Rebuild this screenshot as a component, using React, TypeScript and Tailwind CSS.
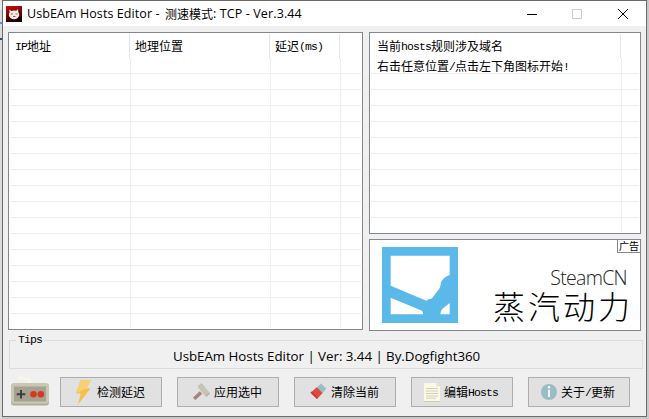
import React from 'react';

const MONO = "font-['Liberation_Mono','Noto_Sans_CJK_SC',monospace]";
const CJK = "font-['Noto_Sans_CJK_SC',sans-serif]";
const UI = "font-['Open_Sans','Noto_Sans_CJK_SC',sans-serif]";

function L({ children }: { children: React.ReactNode }) {
  return <span className={`${MONO} pt-0.5 text-[11.5px] leading-3 tracking-[-0.9px]`}>{children}</span>;
}

function Rows({ count, cols, last }: { count: number; cols: string[]; last: string }) {
  const cells = cols.map((w, i) => <div key={i} className={`${w} h-full shrink-0 border-r border-[#eeeeee]`} />);
  return (
    <>
      {Array.from({ length: count }, (_, i) => (
        <div key={i} className="flex h-4 shrink-0 border-b border-[#eeeeee]">{cells}</div>
      ))}
      <div className={`flex shrink-0 ${last}`}>{cells}</div>
    </>
  );
}

function Btn({ icon, children }: { icon: React.ReactNode; children: React.ReactNode }) {
  return (
    <button className={`flex h-[30px] w-[102px] shrink-0 items-center border border-[#adadad] bg-[#e1e1e1] pl-3 ${CJK} text-[12px] leading-[14px] whitespace-nowrap text-black`}>
      {icon}
      <span className="flex items-center">{children}</span>
    </button>
  );
}

function AppIcon() {
  return (
    <svg width="16" height="16" viewBox="0 0 16 16" className="shrink-0">
      <defs>
        <linearGradient id="red" x1="0" y1="0" x2="0.3" y2="1">
          <stop offset="0" stopColor="#e00808" />
          <stop offset="1" stopColor="#180000" />
        </linearGradient>
      </defs>
      <rect width="16" height="16" fill="url(#red)" />
      <path d="M3.2 3.4 L5.2 5 Q8 4.2 10.3 4.8 L12 3 L12.3 6.2 Q13.6 7.6 13.3 9.6 Q12 13.2 8 13.2 Q4 13.2 2.9 9.6 Q2.6 7.6 3.7 6.2 Z" fill="#f6eeee" />
      <path d="M5 8h2M9.5 8h2M7 10.5h2.5" stroke="#d43a3a" strokeWidth="1" />
    </svg>
  );
}

function Gamepad() {
  return (
    <svg width="39" height="30" viewBox="0 0 39 30" className="shrink-0">
      <path d="M8 3 Q8 1 11 2 L16 3.2 Q20 3.6 18.5 7 L18.5 9" fill="none" stroke="#f7f6e9" strokeWidth="2.8" />
      <rect x="0" y="8" width="38" height="21.5" rx="3" fill="#aeab98" />
      <rect x="0" y="7" width="38" height="20.8" rx="3" fill="#c9c6b4" />
      <rect x="3" y="10.5" width="32" height="15" fill="#a5a292" />
      <path d="M5.7 18.2h8.6M10 14v8.4" stroke="#3e3e3e" strokeWidth="2" />
      <circle cx="22.5" cy="18.3" r="3.3" fill="#d63a1e" />
      <circle cx="29.8" cy="18.3" r="3.3" fill="#d63a1e" />
    </svg>
  );
}

function Bolt() {
  return (
    <svg width="24" height="26" viewBox="0 0 24 26" className="shrink-0">
      <path d="M7.5 1H18L13.5 9.5H17.5L5 25.5L7.8 14.5H3Z" fill="#f3c04a" />
      <path d="M7.5 1H18L13.5 9.5L3 14.5Z" fill="#f7d074" />
    </svg>
  );
}

function Hammer() {
  return (
    <svg width="24" height="24" viewBox="0 0 24 24" className="shrink-0">
      <path d="M11 12.5L4.2 18.8" stroke="#a98378" strokeWidth="3.6" />
      <path d="M9.5 4.5L17.5 14" stroke="#b6b5ab" strokeWidth="5" transform="translate(.7 1.3)" />
      <path d="M9.5 4.5L17.5 14" stroke="#c7c4b3" strokeWidth="5" />
    </svg>
  );
}

function Eraser() {
  return (
    <svg width="24" height="24" viewBox="0 0 24 24" className="shrink-0">
      <path d="M14 3.5L19.3 8.8L14.5 14L8.8 8.5Z" fill="#99bec8" />
      <path d="M9.8 7.2L15.6 13L10 19L3.5 12.8Z" fill="#dc4b3e" />
      <path d="M3.5 12.8L10 19L11.2 17.6L4.8 11.6Z" fill="#c54036" />
    </svg>
  );
}

function Doc() {
  return (
    <svg width="20" height="24" viewBox="0 0 20 24" className="shrink-0">
      <path d="M0 3H12.5L16 6.5V22H0Z" fill="#fbf8e5" />
      <path d="M0 21.5H16" stroke="#cdcabb" />
      <path d="M12.5 3V6.5H16Z" fill="#e4e1cf" />
      <path d="M2 8.5H14M2 11H14M2 13.5H14M2 16H14M2 18.2H12" stroke="#d2cfbd" />
    </svg>
  );
}

function Info() {
  return (
    <svg width="20" height="24" viewBox="0 0 20 24" className="shrink-0">
      <circle cx="8" cy="12" r="8" fill="#99bdc5" />
      <circle cx="8" cy="7.3" r="1.2" fill="#fff" />
      <path d="M8 9.8V17" stroke="#fff" strokeWidth="1.7" />
    </svg>
  );
}

function SteamLogo() {
  return (
    <svg width="76" height="76" viewBox="0 0 228 228" className="mt-[7px] ml-3 shrink-0">
      <rect width="228" height="228" fill="#5ab9e8" />
      <path d="M26 26H203V84Q184 91 177 106L174 122L150 154Q146 157 140 157L133 161L26 116Z" fill="#fff" />
      <path d="M26 152L120 191Q124 196 123 202H26Z" fill="#fff" />
      <path d="M203 168V202H175Q176 190 181 186Z" fill="#fff" />
    </svg>
  );
}

export default function App() {
  return (
    <div className="flex h-[419px] w-[649px] overflow-hidden bg-[#c9c9c9] text-black">
      <div className="flex w-0.5 shrink-0 flex-col bg-[#dadada]">
        <div className="h-2.5 bg-[#e8e8e8]" />
        <div className="mt-3 h-0.5 bg-[#5599dd]" />
        <div className="mt-3.5 h-0.5 bg-[#2a4a80]" />
      </div>
      <div className="flex h-[417px] w-[645px] shrink-0 flex-col border border-[#6b6b6b] bg-[#f0f0f0]">
        <header className={`flex h-[25px] shrink-0 items-center bg-white pl-[3px] ${UI}`}>
          <AppIcon />
          <div className="ml-[5px] flex w-[280px] items-center text-[12.5px] leading-4 whitespace-pre">
            <span className="w-[138px] tracking-[0.08px]">UsbEAm Hosts Editor - </span>
            <span className={`${CJK} w-12 text-[12px]`}>测速模式</span>
            <span className="tracking-[0.12px]">: TCP - Ver.3.44</span>
          </div>
          <svg width="104" height="12" viewBox="0 0 104 12" className="ml-[219px] shrink-0" fill="none" shapeRendering="crispEdges">
            <path d="M1 6.5H11" stroke="#000" />
            <rect x="46.5" y="1.5" width="9" height="9" stroke="#ccc" />
            <path d="M92 1L102 11M102 1L92 11" stroke="#000" shapeRendering="auto" />
          </svg>
        </header>

        <main className="mt-1.5 flex h-[299px] shrink-0 gap-1.5 pl-[5px]">
          <section className="flex h-[298px] w-[355px] shrink-0 flex-col overflow-hidden border border-[#828790] bg-white p-px">
            <div className={`flex h-6 shrink-0 ${CJK} text-[12px] leading-6`}>
              <div className="flex w-[120px] items-center border-r border-[#e5e5e5] pl-[5px]"><L>IP</L>地址</div>
              <div className="flex w-[140px] items-center border-r border-[#e5e5e5] pl-[5px]">地理位置</div>
              <div className="flex w-[70px] items-center border-r border-[#e5e5e5] pl-[5px]">延迟<L>(ms)</L></div>
            </div>
            <Rows count={16} cols={['w-[121px]', 'w-[140px]', 'w-[70px]']} last="h-3.5" />
          </section>

          <div className="flex w-[272px] shrink-0 flex-col gap-[5px]">
            <section className="flex h-[202px] shrink-0 flex-col overflow-hidden border border-[#828790] bg-white p-px">
              <div className={`flex h-6 shrink-0 ${CJK} text-[12px] leading-6`}>
                <div className="flex w-[250px] items-center border-r border-[#e5e5e5] pl-1.5 whitespace-nowrap">当前<L>hosts</L>规则涉及域名</div>
              </div>
              <div className={`flex h-4 shrink-0 border-b border-[#eeeeee] ${CJK} text-[12px] leading-[15px]`}>
                <div className="flex w-[251px] items-center border-r border-[#eeeeee] pl-1.5 whitespace-nowrap">
                  右击任意位置<L>/</L>点击左下角图标开始<L>!</L>
                </div>
              </div>
              <Rows count={9} cols={['w-[251px]']} last="h-3.5" />
            </section>

            <section className="flex h-[92px] shrink-0 border border-[#828790] bg-white">
              <SteamLogo />
              <div className="flex grow flex-col items-end whitespace-nowrap">
                <div className={`flex h-[13px] w-[23px] items-center justify-center border-b border-l border-[#828790] ${CJK} text-[10px] leading-none`}>广告</div>
                <div className="mt-[13px] mr-[13px] font-['Open_Sans',sans-serif] text-[19.5px] leading-6 font-light tracking-[-0.7px] text-[#222]">SteamCN</div>
                <div className={`-mt-px mr-[7px] ${CJK} text-[32px] leading-8 font-light tracking-[3px]`}>蒸汽动力</div>
              </div>
            </section>
          </div>
        </main>

        <fieldset className="mx-1.5 mt-[3px] h-[35px] w-[634px] shrink-0 border border-[#dcdcdc] pb-0">
          <legend className={`ml-1.5 h-3 px-0.5 ${MONO} text-[11.5px] leading-3 tracking-[-0.9px]`}>Tips</legend>
          <div className={`pl-[163px] ${UI} text-[13.33px] leading-5 tracking-[-0.04px] whitespace-pre`}>UsbEAm Hosts Editor | Ver: 3.44 | By.Dogfight360</div>
        </fieldset>

        <footer className="mt-[7px] flex h-9 shrink-0 items-start pl-2">
          <Gamepad />
          <div className="mt-px ml-[10px] flex gap-[15px]">
            <Btn icon={<Bolt />}>检测延迟</Btn>
            <Btn icon={<Hammer />}>应用选中</Btn>
            <Btn icon={<Eraser />}>清除当前</Btn>
            <Btn icon={<Doc />}>编辑<L>Hosts</L></Btn>
            <Btn icon={<Info />}>关于<L>/</L>更新</Btn>
          </div>
        </footer>
      </div>
    </div>
  );
}
